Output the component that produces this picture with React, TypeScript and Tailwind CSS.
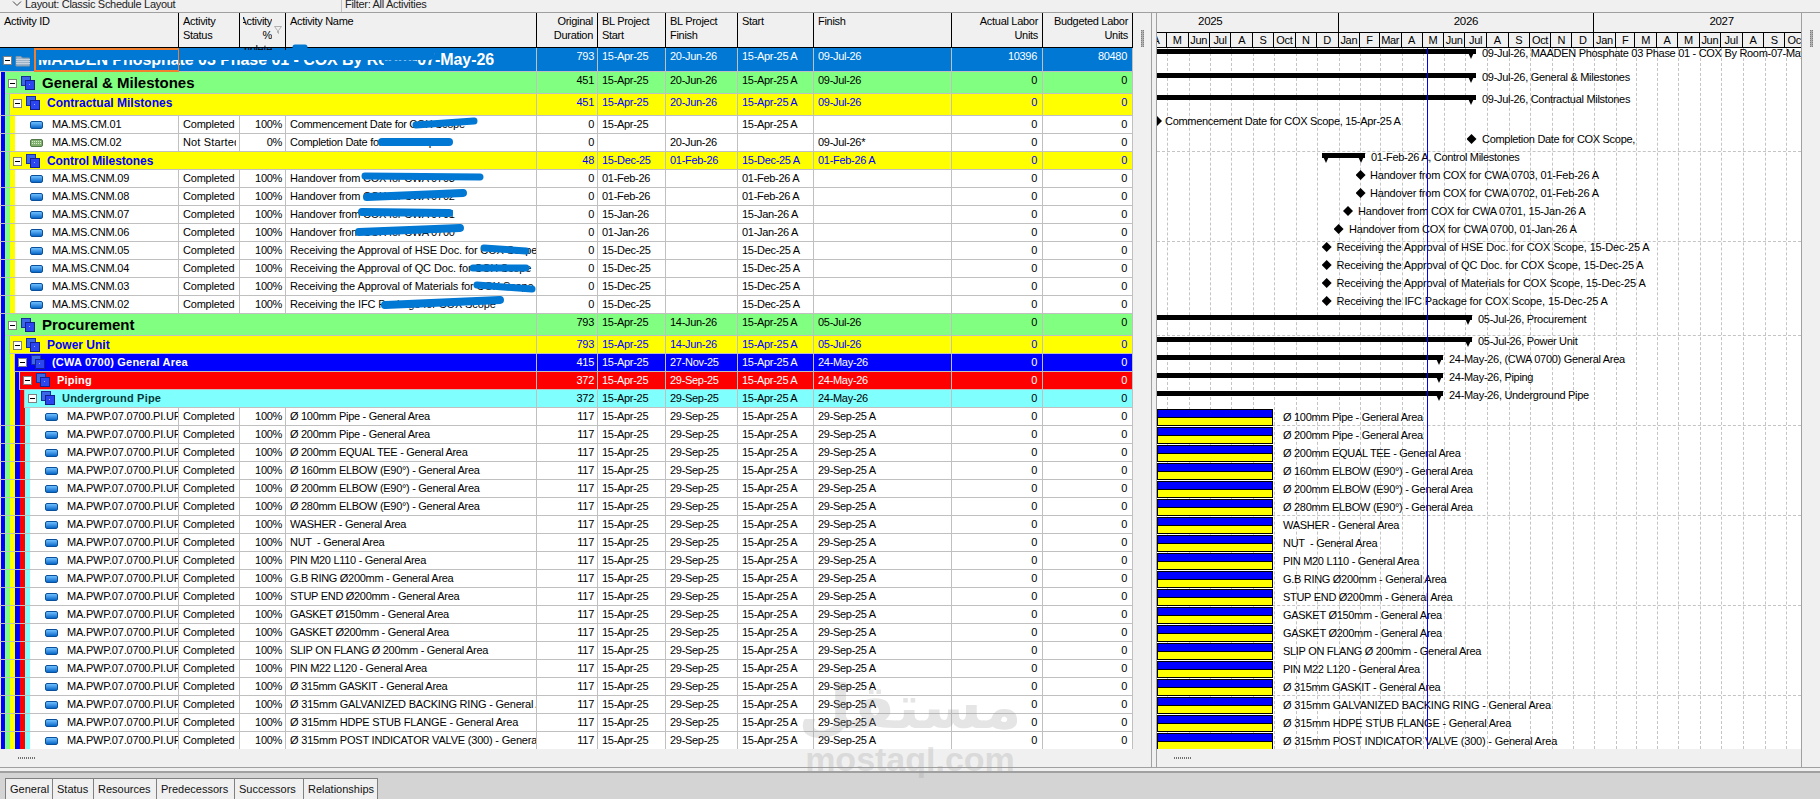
import React from "react";

const COLS = "grid-cols-[179px_61px_46px_251px_61px_68px_72px_76px_138px_91px_90px]";
const LINE = "border-[#c0c0c0]";

const STRIP_W = [5, 5, 5, 5, 5, 5];
const NEST = ["bg-[#0000ff]", "bg-[#80ff80]", "bg-[#ffff00]", "bg-[#0000ff]", "bg-[#ff0000]", "bg-[#80ffff]"];

function Strips({ depth }: { depth: number }) {
  return (
    <>
      {NEST.slice(0, depth).map((c, i) => (
        <div key={i} className={`h-full shrink-0 ${c} ${i === 0 ? "border-l border-[#f0f0f0]" : ""}`} style={{ width: STRIP_W[i] }} />
      ))}
    </>
  );
}

function Box() {
  return (
    <div className="w-[9px] h-[9px] shrink-0 bg-white border border-[#808080] flex items-center justify-center">
      <div className="w-[5px] h-px bg-black" />
    </div>
  );
}

function GroupIcon() {
  return (
    <svg width="14" height="14" viewBox="0 0 14 14" className="shrink-0">
      <rect x="0.5" y="0.5" width="9" height="9" fill="#3a66e8" stroke="#1c2f9c" />
      <rect x="4.5" y="4.5" width="9" height="9" fill="#2b46f0" stroke="#14208c" />
      <rect x="8" y="8" width="1" height="1" fill="#9fb4ff" />
    </svg>
  );
}

function FolderIcon() {
  return (
    <svg width="16" height="13" viewBox="0 0 16 13" className="shrink-0">
      <path d="M1 2.5 h5 l1.5 1.5 h7 v8 h-13.5 z" fill="#9db4c8" stroke="#7f95a8" />
      <path d="M1 5.5 h14 M1 7.5 h14 M1 9.5 h14" stroke="#c7d4df" />
    </svg>
  );
}

function ActIcon({ green }: { green?: boolean }) {
  if (green) {
    return (
      <div className="w-[13px] h-[8px] shrink-0 rounded-[2px] border border-[#4f7a45] bg-[#7fae6e] flex items-center justify-center">
        <div className="w-[9px] h-[3px] border-t border-b border-dotted border-[#d6eccb]" />
      </div>
    );
  }
  return <div className="w-[13px] h-[8px] shrink-0 rounded-[2px] border border-[#0a4f99] bg-linear-to-b from-[#6cc0ff] to-[#0068c8]" />;
}

type Vals = [string, string, string, string, string, string, string];

function ValueCells({ v }: { v: Vals }) {
  const [dur, bs, bf, s, f, a, b] = v;
  const cell = `border-r ${LINE} overflow-hidden whitespace-nowrap leading-[17px]`;
  return (
    <>
      <div className={`${cell} text-right pr-[3px]`}>{dur}</div>
      <div className={`${cell} pl-[4px]`}>{bs}</div>
      <div className={`${cell} pl-[4px]`}>{bf}</div>
      <div className={`${cell} pl-[4px]`}>{s}</div>
      <div className={`${cell} pl-[4px]`}>{f}</div>
      <div className={`${cell} text-right pr-[5px]`}>{a}</div>
      <div className={`${cell} text-right pr-[5px]`}>{b}</div>
    </>
  );
}

function GroupRow({
  depth, name, v, h, bg, text, nameClass, nudge,
}: { depth: number; name: string; v: Vals; h: string; bg: string; text: string; nameClass: string; nudge: string }) {
  return (
    <div className={`grid ${COLS} ${h} ${bg} ${text} border-b ${LINE}`}>
      <div className={`col-span-4 flex h-full min-w-0 border-r ${LINE}`}>
        <Strips depth={depth} />
        <div className={`flex items-center h-full ${nudge} ${depth > 1 ? "border-l border-[#c0c0c0] -ml-px" : ""}`}>
          <div className="w-[3px] shrink-0" />
          <Box />
          <div className="w-[4px] shrink-0" />
          <GroupIcon />
          <div className="w-[7px] shrink-0" />
          <span className={`whitespace-nowrap ${nameClass}`}>{name}</span>
        </div>
      </div>
      <ValueCells v={v} />
    </div>
  );
}

function spacing(name: string) {
  if (name.startsWith("Receiving")) return "tracking-[-0.12px]";
  if (name.startsWith("Handover")) return "tracking-[-0.2px]";
  if (name.includes("GALVANIZED") || name.includes("POST") || name.includes("HDPE")) return "tracking-[-0.2px]";
  return "";
}

function DataRow({
  depth, id, status, pct, name, v, green,
}: { depth: number; id: string; status: string; pct: string; name: string; v: Vals; green?: boolean }) {
  return (
    <div className={`grid ${COLS} h-[18px] bg-white text-black border-b ${LINE}`}>
      <div className={`flex h-full min-w-0 overflow-hidden border-r ${LINE}`}>
        <Strips depth={depth} />
        <div className="w-[15px] shrink-0" />
        <div className="flex items-center h-full"><ActIcon green={green} /></div>
        <div className="w-[9px] shrink-0" />
        <span className="whitespace-nowrap leading-[17px] tracking-[-0.2px]">{id}</span>
      </div>
      <div className={`border-r ${LINE} whitespace-nowrap leading-[17px] pl-[4px]`}>
        <div className={`w-[53px] overflow-hidden ${status === "Not Started" ? "tracking-[0.15px]" : "tracking-[-0.2px]"}`}>{status}</div>
      </div>
      <div className={`border-r ${LINE} overflow-hidden whitespace-nowrap leading-[17px] text-right pr-[3px]`}>{pct}</div>
      <div className={`border-r ${LINE} overflow-hidden whitespace-pre leading-[17px] pl-[4px] ${spacing(name)}`}>{name}</div>
      <ValueCells v={v} />
    </div>
  );
}

function HeaderCell({ lines, right }: { lines: string[]; right?: boolean }) {
  return (
    <div className={`h-full overflow-hidden border-r border-black pt-px leading-[14px] flex flex-col whitespace-nowrap ${right ? "items-end pr-[4px]" : "pl-[4px]"}`}>
      {lines.map((l) => (
        <span key={l}>{l}</span>
      ))}
    </div>
  );
}

const A: Vals = ["117", "15-Apr-25", "29-Sep-25", "15-Apr-25 A", "29-Sep-25 A", "0", "0"];
const pipeNames = [
  "Ø 100mm Pipe - General Area",
  "Ø 200mm Pipe - General Area",
  "Ø 200mm EQUAL TEE - General Area",
  "Ø 160mm ELBOW (E90°) - General Area",
  "Ø 200mm ELBOW (E90°) - General Area",
  "Ø 280mm ELBOW (E90°) - General Area",
  "WASHER - General Area",
  "NUT  - General Area",
  "PIN M20 L110 - General Area",
  "G.B RING Ø200mm - General Area",
  "STUP END Ø200mm - General Area",
  "GASKET Ø150mm - General Area",
  "GASKET Ø200mm - General Area",
  "SLIP ON FLANG Ø 200mm - General Area",
  "PIN M22 L120 - General Area",
  "Ø 315mm GASKIT - General Area",
  "Ø 315mm GALVANIZED BACKING RING - General Area",
  "Ø 315mm HDPE STUB FLANGE - General Area",
  "Ø 315mm POST INDICATOR VALVE (300) - General Area",
];

const cnm: { id: string; name: string; bs: string; s: string }[] = [
  { id: "MA.MS.CNM.09", name: "Handover from COX for CWA 0703", bs: "01-Feb-26", s: "01-Feb-26 A" },
  { id: "MA.MS.CNM.08", name: "Handover from COX for CWA 0702", bs: "01-Feb-26", s: "01-Feb-26 A" },
  { id: "MA.MS.CNM.07", name: "Handover from COX for CWA 0701", bs: "15-Jan-26", s: "15-Jan-26 A" },
  { id: "MA.MS.CNM.06", name: "Handover from COX for CWA 0700", bs: "01-Jan-26", s: "01-Jan-26 A" },
  { id: "MA.MS.CNM.05", name: "Receiving the Approval of HSE Doc. for COX Scope", bs: "15-Dec-25", s: "15-Dec-25 A" },
  { id: "MA.MS.CNM.04", name: "Receiving the Approval of QC Doc. for COX Scope", bs: "15-Dec-25", s: "15-Dec-25 A" },
  { id: "MA.MS.CNM.03", name: "Receiving the Approval of Materials for COX Scope", bs: "15-Dec-25", s: "15-Dec-25 A" },
  { id: "MA.MS.CNM.02", name: "Receiving the IFC Package for COX Scope", bs: "15-Dec-25", s: "15-Dec-25 A" },
];

/* ---------- timeline ---------- */
const GANTT_LEFT = 1157;
const JAN25 = 1082.9;
const PX_DAY = 255.7 / 365;
const MD = [31, 28, 31, 30, 31, 30, 31, 31, 30, 31, 30, 31];
const LABELS: string[][] = [
  ["Jan", "F", "M", "A", "M", "Jun", "Jul", "A", "S", "Oct", "N", "D"],
  ["Jan", "F", "Mar", "A", "M", "Jun", "Jul", "A", "S", "Oct", "N", "D"],
  ["Jan", "F", "M", "A", "M", "Jun", "Jul", "A", "S", "Oct", "N", "D"],
];
const monthW = MD.map((d) => d * PX_DAY);
const yearW = 365 * PX_DAY;
const ticks: number[] = [];
{
  let x = JAN25 - GANTT_LEFT;
  for (let y = 0; y < 3; y++) for (let m = 0; m < 12; m++) {
    x += monthW[m];
    if (x > 0) ticks.push(x);
  }
}

const HEIGHTS = [24, 22, 22, 18, 18, 18, ...Array(8).fill(18), 22, 18, 18, 18, 18, ...Array(19).fill(18)];
const TOPS: number[] = [];
{
  let y = 0;
  for (const h of HEIGHTS) { TOPS.push(y); y += h; }
}
const X = (px: number) => px - GANTT_LEFT;

function Tri({ x, top }: { x: number; top: number }) {
  return (
    <div
      className="absolute w-[9px] h-[10px] bg-black [clip-path:polygon(0_0,100%_0,50%_100%)]"
      style={{ left: x - 4.5, top }}
    />
  );
}
function Label({ x, cy, children }: { x: number; cy: number; children: string }) {
  return (
    <div className={`absolute whitespace-pre leading-[14px] text-black ${spacing(children)}`} style={{ left: x, top: cy - 7 }}>
      {children}
    </div>
  );
}
function Summary({ row, end, tri, lx, label, start }: { row: number; end: number; tri: number; lx: number; label: string; start?: number }) {
  const t = TOPS[row] + 1;
  const l = start ?? 0;
  return (
    <>
      <div className="absolute h-[5px] bg-black" style={{ left: l, width: X(end) - l, top: t }} />
      {start !== undefined && <Tri x={start + 4} top={t} />}
      <Tri x={X(tri)} top={t} />
      <Label x={X(lx)} cy={TOPS[row] + 5}>{label}</Label>
    </>
  );
}
function Diamond({ row, cx, lx, label }: { row: number; cx: number; lx: number; label: string }) {
  const cy = TOPS[row] + 5;
  return (
    <>
      <div
        className="absolute w-[10px] h-[10px] bg-black [clip-path:polygon(50%_0,100%_50%,50%_100%,0_50%)]"
        style={{ left: X(cx) - 5, top: cy - 5 }}
      />
      <Label x={X(lx)} cy={cy}>{label}</Label>
    </>
  );
}

function Gantt() {
  return (
    <div className="relative flex-1 overflow-hidden bg-white">
      {ticks.map((x) => (
        <div key={x} className="absolute top-0 bottom-0 w-0 border-l border-dashed border-[#c4c4c4]" style={{ left: x }} />
      ))}
      {[5, 10, 15, 20, 25, 30, 35].map((r) => (
        <div key={r} className="absolute left-0 right-0 h-0 border-t border-dashed border-[#c4c4c4]" style={{ top: (TOPS[r] ?? 0) - 1 }} />
      ))}
      <Summary row={0} end={1475.5} tri={1471} lx={1482} label="09-Jul-26, MAADEN Phosphate 03 Phase 01 - COX By Room-07-May-26" />
      <Summary row={1} end={1475.5} tri={1471} lx={1482} label="09-Jul-26, General & Milestones" />
      <Summary row={2} end={1475.5} tri={1471} lx={1482} label="09-Jul-26, Contractual Milstones" />
      <Diamond row={3} cx={1157} lx={1165} label="Commencement Date for COX Scope, 15-Apr-25 A" />
      <Diamond row={4} cx={1471.5} lx={1482} label="Completion Date for COX Scope," />
      <Summary row={5} start={X(1322)} end={1364.6} tri={1361} lx={1371} label="01-Feb-26 A, Control Milestones" />
      <Diamond row={6} cx={1360.6} lx={1370} label="Handover from COX for CWA 0703, 01-Feb-26 A" />
      <Diamond row={7} cx={1360.6} lx={1370} label="Handover from COX for CWA 0702, 01-Feb-26 A" />
      <Diamond row={8} cx={1348} lx={1358} label="Handover from COX for CWA 0701, 15-Jan-26 A" />
      <Diamond row={9} cx={1338.6} lx={1349} label="Handover from COX for CWA 0700, 01-Jan-26 A" />
      <Diamond row={10} cx={1326.7} lx={1336.4} label="Receiving the Approval of HSE Doc. for COX Scope, 15-Dec-25 A" />
      <Diamond row={11} cx={1326.7} lx={1336.4} label="Receiving the Approval of QC Doc. for COX Scope, 15-Dec-25 A" />
      <Diamond row={12} cx={1326.7} lx={1336.4} label="Receiving the Approval of Materials for COX Scope, 15-Dec-25 A" />
      <Diamond row={13} cx={1326.7} lx={1336.4} label="Receiving the IFC Package for COX Scope, 15-Dec-25 A" />
      <Summary row={14} end={1472} tri={1468} lx={1478} label="05-Jul-26, Procurement" />
      <Summary row={15} end={1472} tri={1468} lx={1478} label="05-Jul-26, Power Unit" />
      <Summary row={16} end={1443} tri={1439} lx={1449} label="24-May-26, (CWA 0700) General Area" />
      <Summary row={17} end={1443} tri={1439} lx={1449} label="24-May-26, Piping" />
      <Summary row={18} end={1443} tri={1439} lx={1449} label="24-May-26, Underground Pipe" />
      {pipeNames.map((n, i) => {
        const t = TOPS[19 + i];
        return (
          <React.Fragment key={i}>
            <div className="absolute left-0 w-[116px] h-[17px] border border-black bg-[#ffff00]" style={{ top: t + 1 }}>
              <div className="h-[8px] bg-[#0000ff] border-b border-black" />
            </div>
            <Label x={126} cy={t + 9}>{n}</Label>
          </React.Fragment>
        );
      })}
      <div className="absolute top-0 bottom-0 left-[270px] w-px bg-[#0000ff]" />
    </div>
  );
}

function GanttHeader() {
  return (
    <div className="h-[35px] overflow-hidden border-b border-black bg-[#f0f0f0] shrink-0">
      <div className="flex h-[19px] items-center" style={{ marginLeft: JAN25 - GANTT_LEFT, width: yearW * 3 }}>
        {["2025", "2026", "2027"].map((y) => (
          <div key={y} className="h-full shrink-0 border-r border-black text-center leading-[17px] text-[11.5px]" style={{ width: yearW }}>{y}</div>
        ))}
      </div>
      <div className="flex h-[15px] border-t border-black" style={{ marginLeft: JAN25 - GANTT_LEFT, width: yearW * 3 }}>
        {LABELS.flatMap((ls, yi) =>
          ls.map((l, i) => (
            <div key={`${yi}-${i}`} className="h-full shrink-0 overflow-hidden border-r border-black text-center leading-[14px]" style={{ width: monthW[i] }}>{l}</div>
          ))
        )}
      </div>
    </div>
  );
}

function Handle() {
  return <div className="w-[3px] h-[17px] border-x border-dotted border-[#808080] bg-[#b0b0b0]" />;
}

function BottomHandle() {
  return <div className="w-[17px] h-[2px] border-y border-dotted border-[#707070]" />;
}

function Scribbles() {
  const lines: [number, number, number, number, number][] = [
    [40, 55, 430, 55, 10],
    [295, 47, 305, 47, 5],
    [386, 63, 415, 63, 5],
    [416, 125, 474, 121, 7],
    [382, 142, 449, 142, 8],
    [365, 176, 480, 177, 7],
    [367, 197, 463, 193, 8],
    [362, 212, 449, 213, 8],
    [359, 232, 460, 228, 8],
    [484, 248, 526, 251, 7],
    [473, 268, 526, 268, 7],
    [477, 285, 532, 289, 7],
    [385, 305, 500, 300, 8],
  ];
  return (
    <svg className="absolute left-0 top-0 pointer-events-none" width="560" height="320">
      {lines.map(([a, b, c, d, w], i) => (
        <line key={i} x1={a} y1={b} x2={c} y2={d} stroke="#0078d4" strokeWidth={w} strokeLinecap="round" />
      ))}
    </svg>
  );
}

function Tab({ w, label }: { w: string; label: string }) {
  return (
    <div className={`${w} h-full bg-[#f0f0f0] border-t border-r border-[#808080] first:border-l pl-[4px] leading-[20px] whitespace-nowrap tracking-[0px]`}>{label}</div>
  );
}

const GREEN = "bg-[#80ff80]";
const YEL = "bg-[#ffff00]";

export default function App() {
  const full: Vals = ["451", "15-Apr-25", "20-Jun-26", "15-Apr-25 A", "09-Jul-26", "0", "0"];
  return (
    <div className="relative w-[1820px] h-[799px] overflow-hidden bg-[#d4d4d4] flex flex-col font-['Liberation_Sans',Arial,sans-serif] text-[11px] tracking-[-0.3px] text-black">
      {/* filter bar */}
      <div className="h-[13px] shrink-0 flex overflow-hidden bg-[#f0f0f0] border-b border-[#a0a0a0] leading-[9px] text-[#222]">
        <div className="w-[342px] shrink-0 flex items-start border-r border-[#c0c0c0]">
          <svg width="10" height="6" viewBox="0 0 10 6" className="ml-[12px] mr-[3px] mt-[1px]">
            <path d="M1 0.5 L5 4.5 L9 0.5" fill="none" stroke="#444" />
          </svg>
          <span>Layout: Classic Schedule Layout</span>
        </div>
        <span className="pl-[3px]">Filter: All Activities</span>
      </div>

      {/* main panels */}
      <div className="h-[755px] shrink-0 flex bg-[#f0f0f0] border-b border-[#a0a0a0]">
        <div className="w-[1133px] shrink-0 flex flex-col">
          <div className={`grid ${COLS} h-[35px] shrink-0 border-b border-black bg-[#f0f0f0]`}>
            <HeaderCell lines={["Activity ID"]} />
            <HeaderCell lines={["Activity", "Status"]} />
            <div className="relative h-full border-r border-black">
              <div className="ml-[3px] mr-[13px] h-full overflow-hidden pt-px leading-[14px] flex flex-col items-end whitespace-nowrap">
                <span>Activity</span>
                <span>%</span>
                <span>Complete</span>
              </div>
              <svg width="9" height="8" viewBox="0 0 9 8" className="absolute right-[2px] top-[13px]">
                <path d="M0.5 0.5 h7 l-3 4 v3 l-1 -1 v-2 z" fill="none" stroke="#b0b0b0" />
              </svg>
            </div>
            <HeaderCell lines={["Activity Name"]} />
            <HeaderCell lines={["Original", "Duration"]} right />
            <HeaderCell lines={["BL Project", "Start"]} />
            <HeaderCell lines={["BL Project", "Finish"]} />
            <HeaderCell lines={["Start"]} />
            <HeaderCell lines={["Finish"]} />
            <HeaderCell lines={["Actual Labor", "Units"]} right />
            <HeaderCell lines={["Budgeted Labor", "Units"]} right />
          </div>

          <div className="flex-1 min-h-0 overflow-hidden">
            {/* root row */}
            <div className={`grid ${COLS} h-[24px] bg-[#0078d4] text-white border-b ${LINE}`}>
              <div className={`col-span-4 flex items-center h-full border-r ${LINE}`}>
                <div className="w-[3px] shrink-0" />
                <Box />
                <div className="w-[3px] shrink-0" />
                <FolderIcon />
                <div className="w-[7px] shrink-0" />
                <span className="whitespace-nowrap font-bold text-[16px] tracking-[-0.05px]">MAADEN Phosphate 03 Phase 01 - COX By Room-07-May-26</span>
              </div>
              <ValueCells v={["793", "15-Apr-25", "20-Jun-26", "15-Apr-25 A", "09-Jul-26", "10396", "80480"]} />
            </div>
            <GroupRow depth={1} name="General & Milestones" v={full} h="h-[22px]" nudge="pb-[3px]" bg={GREEN} text="text-black" nameClass="font-bold text-[15px] tracking-[0px]" />
            <GroupRow depth={2} name="Contractual Milstones" v={full} h="h-[22px]" nudge="pb-[3px]" bg={YEL} text="text-[#0000ff]" nameClass="font-bold text-[12px] tracking-[0px]" />
            <DataRow depth={3} id="MA.MS.CM.01" status="Completed" pct="100%" name="Commencement Date for COX Scope" v={["0", "15-Apr-25", "", "15-Apr-25 A", "", "0", "0"]} />
            <DataRow depth={3} green id="MA.MS.CM.02" status="Not Started" pct="0%" name="Completion Date for COX Scope" v={["0", "", "20-Jun-26", "", "09-Jul-26*", "0", "0"]} />
            <GroupRow depth={2} name="Control Milestones" v={["48", "15-Dec-25", "01-Feb-26", "15-Dec-25 A", "01-Feb-26 A", "0", "0"]} h="h-[18px]" nudge="pb-[1px]" bg={YEL} text="text-[#0000ff]" nameClass="font-bold text-[12px] tracking-[-0.1px]" />
            {cnm.map((r) => (
              <DataRow key={r.id} depth={3} id={r.id} status="Completed" pct="100%" name={r.name} v={["0", r.bs, "", r.s, "", "0", "0"]} />
            ))}
            <GroupRow depth={1} name="Procurement" v={["793", "15-Apr-25", "14-Jun-26", "15-Apr-25 A", "05-Jul-26", "0", "0"]} h="h-[22px]" nudge="pb-[3px]" bg={GREEN} text="text-black" nameClass="font-bold text-[15px] tracking-[0px]" />
            <GroupRow depth={2} name="Power Unit" v={["793", "15-Apr-25", "14-Jun-26", "15-Apr-25 A", "05-Jul-26", "0", "0"]} h="h-[18px]" nudge="pb-[1px]" bg={YEL} text="text-[#0000ff]" nameClass="font-bold text-[12px] tracking-[0px]" />
            <GroupRow depth={3} name="(CWA 0700) General Area" v={["415", "15-Apr-25", "27-Nov-25", "15-Apr-25 A", "24-May-26", "0", "0"]} h="h-[18px]" nudge="pb-[1px]" bg="bg-[#0000ff]" text="text-white" nameClass="font-bold text-[11px] tracking-[0.2px]" />
            <GroupRow depth={4} name="Piping" v={["372", "15-Apr-25", "29-Sep-25", "15-Apr-25 A", "24-May-26", "0", "0"]} h="h-[18px]" nudge="pb-[1px]" bg="bg-[#ff0000]" text="text-white" nameClass="font-bold text-[11px] tracking-[0.2px]" />
            <GroupRow depth={5} name="Underground Pipe" v={["372", "15-Apr-25", "29-Sep-25", "15-Apr-25 A", "24-May-26", "0", "0"]} h="h-[18px]" nudge="pb-[1px]" bg="bg-[#80ffff]" text="text-black" nameClass="font-bold text-[11px] tracking-[0.2px] text-[#003a3a]" />
            {pipeNames.map((n, i) => (
              <DataRow key={i} depth={6} id={`MA.PWP.07.0700.PI.UP.${String(i + 1).padStart(2, "0")}`} status="Completed" pct="100%" name={n} v={A} />
            ))}
          </div>

          <div className="h-[18px] shrink-0 flex items-center pl-[18px]">
            <BottomHandle />
          </div>
        </div>

        {/* splitter */}
        <div className="w-[24px] shrink-0 flex">
          <div className="w-[18px] pt-[17px] flex justify-center"><Handle /></div>
          <div className="w-[6px] border-x border-[#a0a0a0] bg-[#f0f0f0]" />
        </div>

        {/* gantt */}
        <div className="w-[645px] shrink-0 flex flex-col border-r border-[#a0a0a0]">
          <GanttHeader />
          <Gantt />
          <div className="h-[18px] shrink-0 flex items-center pl-[17px]">
            <BottomHandle />
          </div>
        </div>
        <div className="flex-1 pt-[17px] flex justify-center"><Handle /></div>
      </div>

      {/* separators + tabs */}
      <div className="h-[3px] shrink-0 bg-[#f0f0f0]" />
      <div className="h-[2px] shrink-0 bg-[#a0a0a0]" />
      <div className="flex-1 min-h-0 flex items-end pl-[5px]">
        <div className="flex h-[21px] text-[#111]">
          <Tab w="w-[48px]" label="General" />
          <Tab w="w-[41px]" label="Status" />
          <Tab w="w-[63px]" label="Resources" />
          <Tab w="w-[78px]" label="Predecessors" />
          <Tab w="w-[69px]" label="Successors" />
          <Tab w="w-[74px]" label="Relationships" />
        </div>
      </div>

      <Scribbles />
      {/* selection outline over the root name */}
      <div className="absolute left-[34px] top-[48px] w-[145px] h-[24px] border-2 border-[#f08030] border-r-[1px] pointer-events-none" />

      {/* watermark */}
      <div className="absolute left-[807px] top-[672px] w-[206px] flex flex-col items-center pointer-events-none tracking-normal text-[#9a9a9a] opacity-25">
        <span className="font-['DejaVu_Sans',sans-serif] font-bold text-[61px] leading-[70px]">مستقل</span>
        <span className="font-['Liberation_Sans',sans-serif] font-bold text-[34px] leading-[34px]">mostaql.com</span>
      </div>
    </div>
  );
}
